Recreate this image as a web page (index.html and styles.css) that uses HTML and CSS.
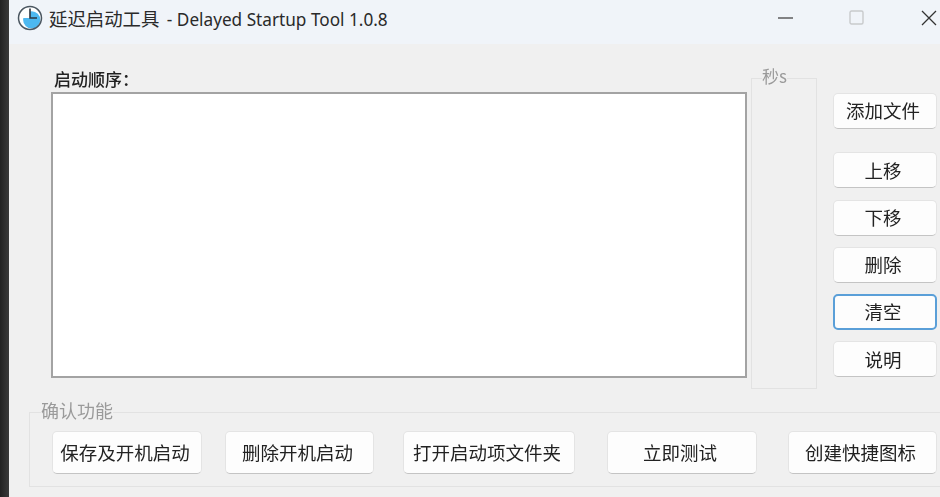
FILE: index.html
```html
<!DOCTYPE html>
<html>
<head>
  <title>延迟启动工具 - Delayed Startup Tool 1.0.8</title>
  <link rel="stylesheet" href="styles.css">
</head>
<body>
  <div class="edge"></div>
  <div class="window">
    <div class="titlebar">
      <svg class="app-icon" width="26" height="26" viewBox="0 0 26 26">
        <circle cx="13" cy="13" r="11.5" fill="#fff"/>
        <circle cx="14.7" cy="14.8" r="8.6" fill="#4db8f0"/>
        <path d="M13 13 V3 H3 V13 Z" fill="#fff"/>
        <circle cx="13" cy="13" r="11.5" fill="none" stroke="#4a5660" stroke-width="1.5"/>
        <path d="M13 3.5 V13 H20" fill="none" stroke="#2c3640" stroke-width="1.6"/>
      </svg>
      <span class="title">延迟启动工具<span class="title-en"> - Delayed Startup Tool 1.0.8</span></span>
      <div class="controls">
        <svg class="ctl-min" width="16" height="16" viewBox="0 0 16 16"><path d="M0 8 H15" stroke="#444" stroke-width="1.3"/></svg>
        <svg class="ctl-max" width="16" height="16" viewBox="0 0 16 16"><rect x="1" y="1" width="13" height="13" rx="1.5" fill="none" stroke="#c8cacc" stroke-width="1.4"/></svg>
        <svg class="ctl-close" width="16" height="16" viewBox="0 0 16 16"><path d="M1 1 L15 15 M15 1 L1 15" stroke="#333" stroke-width="1.3"/></svg>
      </div>
    </div>

    <div class="main">
      <div class="list-col">
        <div class="list-label">启动顺序：</div>
        <div class="list-box"></div>
      </div>
      <fieldset class="seconds">
        <legend>秒s</legend>
      </fieldset>
      <div class="side">
        <button class="btn add">添加文件</button>
        <button class="btn">上移</button>
        <button class="btn">下移</button>
        <button class="btn">删除</button>
        <button class="btn focused">清空</button>
        <button class="btn">说明</button>
      </div>
    </div>

    <fieldset class="confirm">
      <legend>确认功能</legend>
      <button class="btn w-save">保存及开机启动</button>
      <button class="btn w-del">删除开机启动</button>
      <button class="btn w-open">打开启动项文件夹</button>
      <button class="btn w-test">立即测试</button>
      <button class="btn w-link">创建快捷图标</button>
    </fieldset>
  </div>
</body>
</html>
```

FILE: styles.css
```css
html, body {
  margin: 0;
  height: 100%;
  overflow: hidden;
}

body {
  display: flex;
  background-color: #f0f0f0;
  font-family: "Noto Sans CJK SC", "Noto Sans", sans-serif;
  color: #222;
}

.edge {
  width: 9px;
  flex: none;
  background: linear-gradient(to right, #222, #3a3a3a);
}

/* the source is a soft video frame */
.window {
  flex: 1;
  min-width: 0;
  display: flex;
  flex-direction: column;
  filter: blur(0.4px);
}

.titlebar {
  height: 44px;
  flex: none;
  display: flex;
  align-items: center;
  padding: 0 3px 8px 8px;
  box-sizing: border-box;
  background-color: #f0f4f9;
}

.app-icon {
  flex: none;
}

.title {
  margin-left: 6px;
  font-size: 18.4px;
  color: #2a2a2a;
  white-space: nowrap;
}

.title-en {
  margin-left: 3px;
  font-family: "Noto Sans", sans-serif;
  font-size: 17.2px;
}

.controls {
  margin-left: auto;
  display: flex;
  align-items: center;
}

.ctl-max {
  margin-left: 55px;
}

.ctl-close {
  margin-left: 56px;
}

.main {
  display: flex;
  padding: 22px 0 0 42px;
  height: 334px;
  flex: none;
}

.list-col {
  width: 696px;
  flex: none;
}

.list-label {
  height: 26px;
  line-height: 26px;
  padding-left: 3px;
  font-size: 17px;
  font-weight: 500;
}

.list-box {
  height: 286px;
  box-sizing: border-box;
  background-color: #fff;
  border: 2px solid #a3a3a3;
}

fieldset {
  margin: 0;
  padding: 0;
  box-sizing: border-box;
  border: 1px solid #e2e2e2;
}

legend {
  color: #9a9a9a;
  padding: 0 0 4px;
  line-height: 20px;
}

.seconds {
  width: 66px;
  height: 323px;
  margin: 0 0 0 4px;
}

.seconds legend {
  margin-left: 10px;
  font-size: 17px;
}

.side {
  width: 104px;
  margin: 27px 0 0 16px;
  display: flex;
  flex-direction: column;
  gap: 11.25px;
}

.btn {
  height: 36px;
  padding: 0 4px 1px 0;
  flex: none;
  font-family: inherit;
  font-size: 18.5px;
  line-height: 1;
  color: #222;
  background-color: #fdfdfd;
  border: 1px solid #e4e4e4;
  border-bottom-color: #c4c4c4;
  border-radius: 5px;
  white-space: nowrap;
}

.add {
  margin-bottom: 12px;
}

.focused {
  border: 2px solid #5a9fd8;
}

.confirm {
  margin: 0 0 0 20px;
  height: 87px;
  padding: 0 0 0 22px;
  border-right: none;
  display: flex;
  align-items: flex-start;
}

.confirm legend {
  margin-left: -11px;
  font-size: 18px;
}

.confirm .btn {
  height: 43px;
  margin-top: 7px;
}

.w-save { width: 150px; }
.w-del { width: 149px; margin-left: 23px; }
.w-open { width: 172px; margin-left: 29px; }
.w-test { width: 150px; margin-left: 32px; }
.w-link { width: 149px; margin-left: 31px; }
```
